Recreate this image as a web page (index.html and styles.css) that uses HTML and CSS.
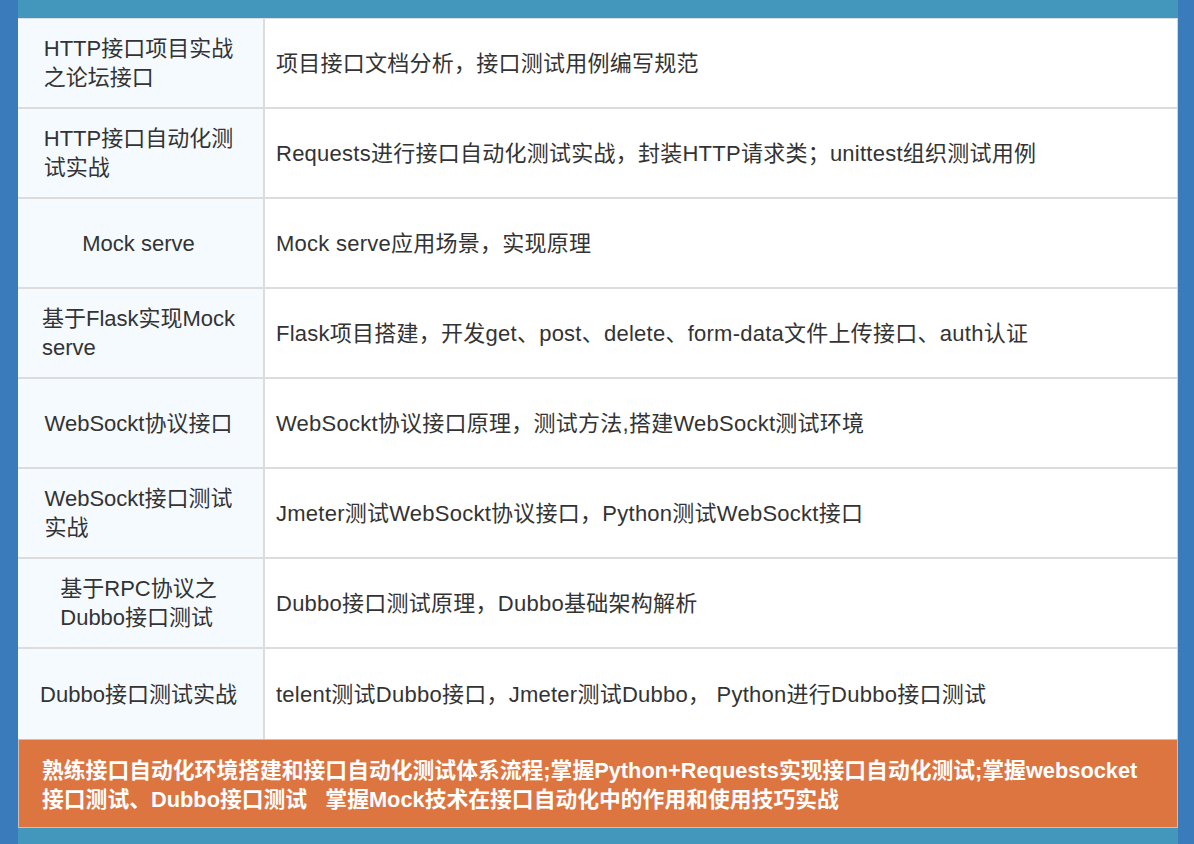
FILE: index.html
```html
<!DOCTYPE html>
<html lang="zh-CN">
<head>
<meta charset="utf-8">
<title>课程大纲</title>
<link rel="stylesheet" href="styles.css">
</head>
<body>
<div class="frame">
  <div class="table">
    <div class="row">
      <div class="name"><span class="name-text">HTTP接口项目实战<br>之论坛接口</span></div>
      <div class="desc">项目接口文档分析，接口测试用例编写规范</div>
    </div>
    <div class="row">
      <div class="name"><span class="name-text">HTTP接口自动化测<br>试实战</span></div>
      <div class="desc">Requests进行接口自动化测试实战，封装HTTP请求类；unittest组织测试用例</div>
    </div>
    <div class="row">
      <div class="name"><span class="name-text">Mock serve</span></div>
      <div class="desc">Mock serve应用场景，实现原理</div>
    </div>
    <div class="row">
      <div class="name"><span class="name-text">基于Flask实现Mock<br>serve</span></div>
      <div class="desc">Flask项目搭建，开发get、post、delete、form-data文件上传接口、auth认证</div>
    </div>
    <div class="row">
      <div class="name"><span class="name-text">WebSockt协议接口</span></div>
      <div class="desc">WebSockt协议接口原理，测试方法,搭建WebSockt测试环境</div>
    </div>
    <div class="row">
      <div class="name"><span class="name-text">WebSockt接口测试<br>实战</span></div>
      <div class="desc">Jmeter测试WebSockt协议接口，Python测试WebSockt接口</div>
    </div>
    <div class="row">
      <div class="name"><span class="name-text">基于RPC协议之<br>Dubbo接口测试</span></div>
      <div class="desc">Dubbo接口测试原理，Dubbo基础架构解析</div>
    </div>
    <div class="row">
      <div class="name"><span class="name-text">Dubbo接口测试实战</span></div>
      <div class="desc">telent测试Dubbo接口，Jmeter测试Dubbo，&nbsp;Python进行Dubbo接口测试</div>
    </div>
  </div>
  <div class="summary">熟练接口自动化环境搭建和接口自动化测试体系流程;掌握Python+Requests实现接口自动化测试;掌握websocket<br>接口测试、Dubbo接口测试&nbsp;&nbsp;&nbsp;掌握Mock技术在接口自动化中的作用和使用技巧实战</div>
</div>
</body>
</html>
```

FILE: styles.css
```css
html, body {
  margin: 0;
  padding: 0;
}
body {
  background: #3a7bbb;
  font-family: "Liberation Sans", "Noto Sans CJK SC", sans-serif;
  font-size: 22px;
  color: #333333;
}
.frame {
  margin: 0 16px 0 18px;
  background: #4497bc;
  padding: 18px 0 16px;
  height: 844px;
  box-sizing: border-box;
}
.table {
  background: #ffffff;
  border-top: 1px solid #d9dee3;
  border-right: 1px solid #cfd4d9;
}
.row {
  display: grid;
  grid-template-columns: 247px 1fr;
  height: 90px;
  box-sizing: border-box;
  border-bottom: 2px solid #dcdcdc;
}
.row:last-child {
  border-bottom: none;
}
.name {
  background: #f5faff;
  border-right: 2px solid #dcdcdc;
  display: flex;
  align-items: center;
  justify-content: center;
  line-height: 29px;
  padding-right: 4px;
}
.name-text {
  display: inline-block;
  text-align: left;
}
.desc {
  display: flex;
  align-items: center;
  padding-left: 11px;
  line-height: 29px;
  letter-spacing: 0.25px;
}
.summary {
  background: #dd7541;
  color: #ffffff;
  font-weight: bold;
  font-size: 21.8px;
  height: 89px;
  box-sizing: border-box;
  border: 1px solid #c8c0bb;
  padding: 16px 0 0 23px;
  line-height: 29px;
}
```
